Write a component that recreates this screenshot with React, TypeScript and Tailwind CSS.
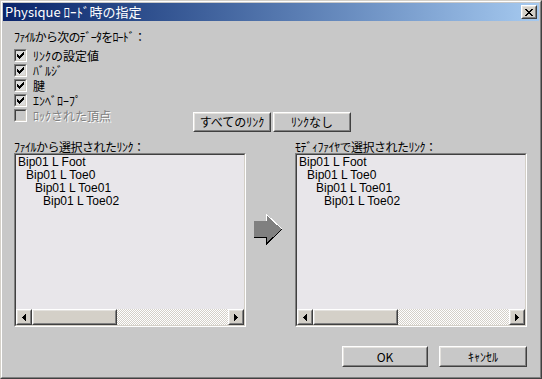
import React from 'react';

// 3ds Max "Physique load" dialog, classic Win2000 look

const CHECK = ['......X', '.....XX', 'X...XXX', 'XX.XXX.', 'XXXXX..', '.XXX...', '..X....'];
const CLOSE_X = ['XX....XX', '.XX..XX.', '..XXXX..', '...XX...', '..XXXX..', '.XX..XX.', 'XX....XX'];

const LINKS = [
  { name: 'Bip01 L Foot', indent: 'pl-[2px]' },
  { name: 'Bip01 L Toe0', indent: 'pl-[10px]' },
  { name: 'Bip01 L Toe01', indent: 'pl-[19px]' },
  { name: 'Bip01 L Toe02', indent: 'pl-[27px]' },
];

const OPTIONS = [
  { label: 'ﾘﾝｸの設定値', checked: true },
  { label: 'ﾊﾞﾙｼﾞ', checked: true },
  { label: '腱', checked: true },
  { label: 'ｴﾝﾍﾞﾛｰﾌﾟ', checked: true },
  { label: 'ﾛｯｸされた頂点', checked: false, disabled: true },
];

function PixelGlyph({ rows, color }: { rows: string[]; color: string }) {
  const w = rows[0].length;
  const h = rows.length;
  return (
    <svg width={w} height={h} viewBox={`0 0 ${w} ${h}`} shapeRendering="crispEdges">
      {rows.map((row, y) =>
        row.split('').map((c, x) => (c === 'X' ? <rect key={`${x}-${y}`} x={x} y={y} width={1} height={1} fill={color} /> : null))
      )}
    </svg>
  );
}

function Raised({ className, children }: { className: string; children?: React.ReactNode }) {
  return (
    <div className={`border border-t-white border-l-white border-r-[#404040] border-b-[#404040] ${className}`}>
      <div className="flex h-full w-full items-center justify-center border border-t-[#e4e2de] border-l-[#e4e2de] border-r-[#808080] border-b-[#808080]">
        {children}
      </div>
    </div>
  );
}

function Checkbox({ checked, disabled }: { checked: boolean; disabled?: boolean }) {
  return (
    <div className="h-[13px] w-[13px] shrink-0 border border-t-[#808080] border-l-[#808080] border-r-white border-b-white">
      <div
        className={`flex h-full w-full items-center justify-center border border-t-[#404040] border-l-[#404040] border-r-[#d4d0c8] border-b-[#d4d0c8] ${
          disabled ? 'bg-[#c8c8c8]' : 'bg-[#dcdcdc]'
        }`}
      >
        {checked && <PixelGlyph rows={CHECK} color="#000000" />}
      </div>
    </div>
  );
}

function ScrollArrow({ dir }: { dir: 'left' | 'right' }) {
  return (
    <Raised className="h-[16px] w-[16px] shrink-0 bg-[#d4d0c8]">
      <svg width="4" height="7" viewBox="0 0 4 7" shapeRendering="crispEdges">
        {dir === 'left' ? <polygon points="4,0 4,7 0,3.5" fill="#000" /> : <polygon points="0,0 0,7 4,3.5" fill="#000" />}
      </svg>
    </Raised>
  );
}

function LinkList({ title }: { title: string }) {
  return (
    <div className="flex w-[232px] flex-col">
      <div className="h-[12px] leading-[12px] tracking-[-0.5px] whitespace-nowrap">{title}</div>
      <div className="h-[174px] border border-t-[#808080] border-l-[#808080] border-r-white border-b-white">
        <div className="flex h-full flex-col border border-t-[#404040] border-l-[#404040] border-r-[#d4d0c8] border-b-[#d4d0c8] bg-[#e8e6ea]">
          <div className="flex-1 pt-[1px] font-['Liberation_Sans',Arial,sans-serif] text-[12px]">
            {LINKS.map((l) => (
              <div key={l.name} className={`h-[13px] leading-[13px] whitespace-pre ${l.indent}`}>
                {l.name}
              </div>
            ))}
          </div>
          <div className="flex h-[16px]">
            <ScrollArrow dir="left" />
            <Raised className="h-[16px] w-[85px] shrink-0 bg-[#d4d0c8]" />
            <div className="flex-1 bg-[image:repeating-conic-gradient(#d4d0c8_0_25%,#ffffff_0_50%)] bg-[length:2px_2px]" />
            <ScrollArrow dir="right" />
          </div>
        </div>
      </div>
    </div>
  );
}

function BigArrow() {
  return (
    <svg width="29" height="31" viewBox="0 0 29 31" shapeRendering="crispEdges">
      <polygon points="0,7 12,7 12,0 28,15 12,30 12,23 0,23" fill="#808080" />
      <polyline points="12,7 12,0 28,15" fill="none" stroke="#ffffff" strokeWidth="1" />
      <polyline points="0,23.5 12.5,23.5 12.5,30 28,15" fill="none" stroke="#000000" strokeWidth="1" />
    </svg>
  );
}

export default function App() {
  return (
    <div className="h-[379px] w-[542px] border border-t-[#d4d0c8] border-l-[#d4d0c8] border-r-[#404040] border-b-[#404040] bg-[#c8c8c8] font-['MS_UI_Gothic','Noto_Sans_CJK_JP',sans-serif] text-[12px] text-black">
      <div className="flex h-full flex-col border border-t-white border-l-white border-r-[#808080] border-b-[#808080] p-px">
        {/* Title bar */}
        <div className="flex h-[18px] shrink-0 items-center justify-between bg-linear-to-r from-[#0a246a] to-[#a6caf0] pl-[2px] pr-[2px]">
          <span className="block leading-[18px] text-[13px] text-white whitespace-pre">Physique ﾛｰﾄﾞ時の指定</span>
          <Raised className="h-[14px] w-[16px] bg-[#d4d0c8]">
            <PixelGlyph rows={CLOSE_X} color="#000000" />
          </Raised>
        </div>

        {/* Load options */}
        <div className="mt-[8px] flex pl-[11px]">
          <div className="flex w-[179px] flex-col">
            <div className="h-[15px] leading-[15px] tracking-[-0.8px] whitespace-nowrap">ﾌｧｲﾙから次のﾃﾞｰﾀをﾛｰﾄﾞ：</div>
            <div className="mt-[4px] flex flex-col">
              {OPTIONS.map((o) => (
                <div key={o.label} className="flex h-[15px] items-center gap-[6px]">
                  <Checkbox checked={o.checked} disabled={o.disabled} />
                  <span
                    className={`block h-[15px] leading-[15px] whitespace-nowrap ${
                      o.disabled ? 'text-[#808080] [text-shadow:1px_1px_0_#ffffff]' : ''
                    }`}
                  >
                    {o.label}
                  </span>
                </div>
              ))}
            </div>
          </div>
          <div className="mt-[83px] flex gap-[2px]">
            <Raised className="h-[20px] w-[78px] bg-[#c8c8c8]">
              <span className="block leading-[16px]">すべてのﾘﾝｸ</span>
            </Raised>
            <Raised className="h-[20px] w-[78px] bg-[#c8c8c8]">
              <span className="block leading-[16px]">ﾘﾝｸなし</span>
            </Raised>
          </div>
        </div>

        {/* Link lists */}
        <div className="mt-[9px] flex pl-[11px]">
          <LinkList title="ﾌｧｲﾙから選択されたﾘﾝｸ：" />
          <div className="w-[49px] pt-[73px] pl-[8px]">
            <BigArrow />
          </div>
          <LinkList title="ﾓﾃﾞｨﾌｧｲﾔで選択されたﾘﾝｸ：" />
        </div>

        {/* Dialog buttons */}
        <div className="mt-[19px] flex justify-end gap-[11px] pr-[12px]">
          <Raised className="h-[21px] w-[86px] bg-[#c8c8c8]">
            <span className="block leading-[17px]">OK</span>
          </Raised>
          <Raised className="h-[21px] w-[88px] bg-[#c8c8c8]">
            <span className="block leading-[17px]">ｷｬﾝｾﾙ</span>
          </Raised>
        </div>
      </div>
    </div>
  );
}
